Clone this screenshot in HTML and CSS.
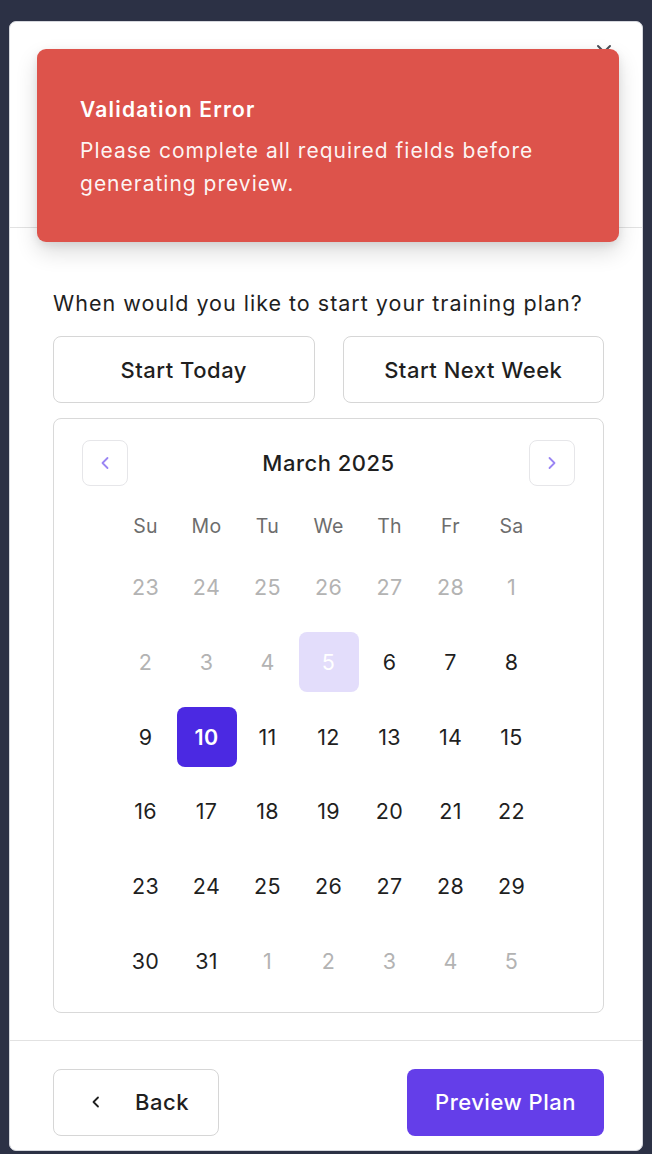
FILE: index.html
```html
<!DOCTYPE html>
<html lang="en">
<head>
<meta charset="utf-8">
<title>Training plan start date</title>
<link rel="stylesheet" href="styles.css">
</head>
<body>
<div class="modal">
  <div class="modal-header">
    <button class="close" aria-label="Close">
      <svg width="18" height="18" viewBox="0 0 18 18"><path d="M3 3 L15 15 M15 3 L3 15" stroke="#4b4f57" stroke-width="2" stroke-linecap="round" fill="none"/></svg>
    </button>
  </div>
  <div class="modal-body">
    <p class="question">When would you like to start your training plan?</p>
    <div class="quick">
      <button class="quick-btn">Start Today</button>
      <button class="quick-btn">Start Next Week</button>
    </div>
    <div class="calendar">
      <div class="cal-nav">
        <button class="nav-btn" aria-label="Previous month">
          <svg width="16" height="16" viewBox="0 0 16 16"><path d="M10.5 3 L5.5 8 L10.5 13" stroke="#9a85f3" stroke-width="1.8" stroke-linecap="round" stroke-linejoin="round" fill="none"/></svg>
        </button>
        <div class="month">March 2025</div>
        <button class="nav-btn" aria-label="Next month">
          <svg width="16" height="16" viewBox="0 0 16 16"><path d="M5.5 3 L10.5 8 L5.5 13" stroke="#9a85f3" stroke-width="1.8" stroke-linecap="round" stroke-linejoin="round" fill="none"/></svg>
        </button>
      </div>
      <div class="weekdays">
        <span>Su</span><span>Mo</span><span>Tu</span><span>We</span><span>Th</span><span>Fr</span><span>Sa</span>
      </div>
      <div class="days">
        <span class="day muted">23</span><span class="day muted">24</span><span class="day muted">25</span><span class="day muted">26</span><span class="day muted">27</span><span class="day muted">28</span><span class="day muted">1</span>
        <span class="day muted">2</span><span class="day muted">3</span><span class="day muted">4</span><span class="day today">5</span><span class="day">6</span><span class="day">7</span><span class="day">8</span>
        <span class="day">9</span><span class="day selected">10</span><span class="day">11</span><span class="day">12</span><span class="day">13</span><span class="day">14</span><span class="day">15</span>
        <span class="day">16</span><span class="day">17</span><span class="day">18</span><span class="day">19</span><span class="day">20</span><span class="day">21</span><span class="day">22</span>
        <span class="day">23</span><span class="day">24</span><span class="day">25</span><span class="day">26</span><span class="day">27</span><span class="day">28</span><span class="day">29</span>
        <span class="day">30</span><span class="day">31</span><span class="day muted">1</span><span class="day muted">2</span><span class="day muted">3</span><span class="day muted">4</span><span class="day muted">5</span>
      </div>
    </div>
  </div>
  <div class="modal-footer">
    <button class="back-btn">
      <svg width="16" height="16" viewBox="0 0 16 16"><path d="M10 3.5 L5.5 8 L10 12.5" stroke="#1f1f1f" stroke-width="1.8" stroke-linecap="round" stroke-linejoin="round" fill="none"/></svg>
      <span>Back</span>
    </button>
    <button class="primary-btn">Preview Plan</button>
  </div>
</div>

<div class="toast" role="alert">
  <div class="toast-title">Validation Error</div>
  <div class="toast-msg">Please complete all required fields before generating preview.</div>
</div>
</body>
</html>
```

FILE: styles.css
```css
* { box-sizing: border-box; }

html, body {
  margin: 0;
  padding: 0;
}

body {
  background: #2c3145;
  font-family: Inter, "Noto Sans", "Liberation Sans", sans-serif;
  color: #1f1f1f;
  min-height: 1154px;
  padding: 21px 9px 0 9px;
}

button {
  font-family: inherit;
  cursor: pointer;
}

.modal {
  background: #ffffff;
  border: 1px solid #d5d7dd;
  border-radius: 7px;
  width: 634px;
  overflow: hidden;
}

.modal-header {
  height: 206px;
  border-bottom: 1.5px solid #e2e2e2;
  display: flex;
  justify-content: flex-end;
  align-items: flex-start;
  padding: 21px 29px 0 0;
}

.close {
  background: none;
  border: none;
  padding: 0;
  width: 18px;
  height: 18px;
  display: flex;
}

.modal-body {
  padding: 61px 38px 27px 43px;
}

.question {
  margin: 0;
  font-size: 21.5px;
  line-height: 28px;
  font-weight: 400;
  letter-spacing: 1px;
  color: #1f1f1f;
  white-space: nowrap;
}

.quick {
  margin-top: 19px;
  display: grid;
  grid-template-columns: 1fr 1fr;
  column-gap: 28px;
}

.quick-btn {
  height: 67px;
  background: #fff;
  border: 1.5px solid #d6d6d6;
  border-radius: 8px;
  font-size: 22px;
  font-weight: 500;
  letter-spacing: 0.5px;
  color: #1f1f1f;
}

.calendar {
  margin-top: 15px;
  border: 1.5px solid #d9d9d9;
  border-radius: 8px;
  padding: 21px 28px 21px 28px;
}

.cal-nav {
  display: flex;
  justify-content: space-between;
  align-items: center;
  height: 46px;
}

.nav-btn {
  width: 46px;
  height: 46px;
  background: #fff;
  border: 1.5px solid #e6e6e9;
  border-radius: 8px;
  display: flex;
  align-items: center;
  justify-content: center;
  padding: 0;
}

.month {
  font-size: 22px;
  font-weight: 500;
  letter-spacing: 0.5px;
  color: #1f1f1f;
}

.weekdays,
.days {
  display: grid;
  grid-template-columns: repeat(7, 61px);
  justify-content: center;
}

.weekdays {
  margin-top: 25px;
  height: 30px;
  align-items: center;
  font-size: 19.5px;
  letter-spacing: 0.3px;
  color: #6d6d6d;
}

.weekdays span {
  text-align: center;
}

.days {
  margin-top: 16px;
  grid-auto-rows: 60px;
  row-gap: 14.8px;
}

.day {
  width: 60px;
  height: 60px;
  justify-self: center;
  display: flex;
  align-items: center;
  justify-content: center;
  font-size: 21.5px;
  letter-spacing: 0.3px;
  color: #1f1f1f;
  border-radius: 8px;
}

.day.muted {
  color: #b3b3b3;
}

.day.today {
  background: #e3ddfb;
  color: #ffffff;
}

.day.selected {
  background: #4b29e2;
  color: #ffffff;
  font-weight: 600;
}

.modal-footer {
  border-top: 1.5px solid #e2e2e2;
  padding: 28px 38px 14px 43px;
  display: flex;
  justify-content: space-between;
  align-items: center;
}

.back-btn {
  width: 166px;
  height: 67px;
  background: #fff;
  border: 1.5px solid #d6d6d6;
  border-radius: 8px;
  display: flex;
  align-items: center;
  justify-content: flex-start;
  gap: 31px;
  padding: 0 0 0 34px;
  font-size: 22px;
  font-weight: 500;
  letter-spacing: 0.5px;
  color: #1f1f1f;
}

.back-btn svg {
  flex: none;
}

.primary-btn {
  width: 197px;
  height: 67px;
  background: #643ee9;
  border: none;
  border-radius: 8px;
  color: #ffffff;
  font-size: 22px;
  font-weight: 500;
  letter-spacing: 0.5px;
}

.toast {
  position: absolute;
  top: 49px;
  left: 37px;
  width: 582px;
  height: 193px;
  background: #dd534b;
  border-radius: 9px;
  box-shadow: 0 10px 22px rgba(0, 0, 0, 0.14), 0 3px 8px rgba(0, 0, 0, 0.08);
  padding: 47px 40px 0 43px;
  color: #ffffff;
}

.toast-title {
  font-size: 21px;
  font-weight: 600;
  line-height: 28px;
  letter-spacing: 1.2px;
}

.toast-msg {
  margin-top: 10px;
  font-size: 21px;
  line-height: 33px;
  letter-spacing: 1px;
  color: rgba(255, 255, 255, 0.94);
}
```
